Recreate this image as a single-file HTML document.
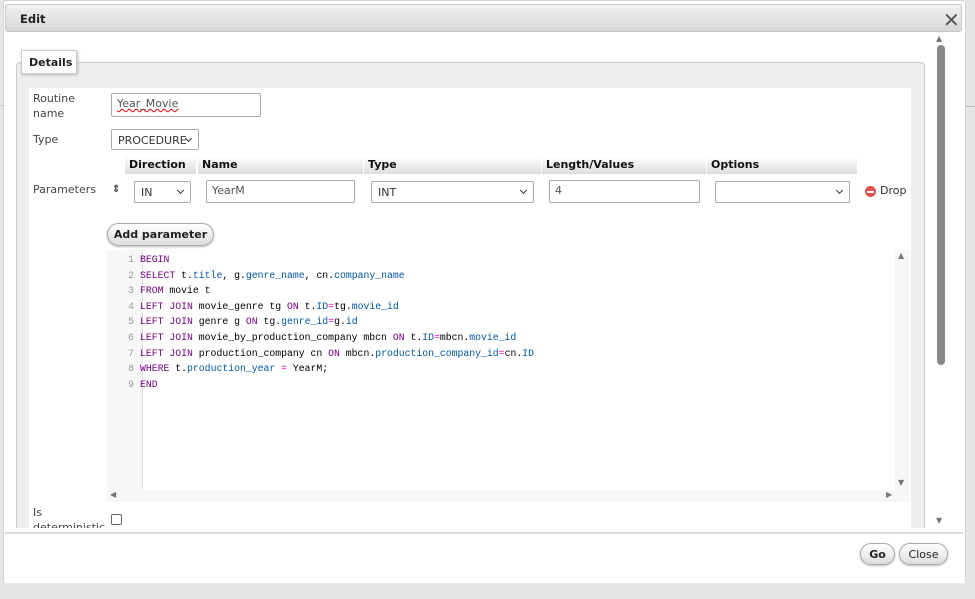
<!DOCTYPE html>
<html><head><style>
*{box-sizing:border-box;margin:0;padding:0}
body{width:975px;height:599px;background:#e6e6e6;position:relative;overflow:hidden;font-family:"DejaVu Sans","Liberation Sans",sans-serif;font-size:11px;color:#333}
.a{position:absolute}
.dlg{left:3px;top:0;width:963px;height:583px;background:#fff;border:1px solid #d4d4d4;border-radius:3px}
.title{left:5px;top:4px;width:957px;height:28px;background:linear-gradient(#f2f2f2,#d8d8d8);border:1px solid #c8c8c8;border-radius:3px;font-weight:bold;color:#222;padding:7px 14px;font-size:11.5px}
.field{left:16px;top:62px;width:909px;height:480px;border:1px solid #ccc;border-radius:4px;background:#eee}
.inner{left:29px;top:88px;width:882px;height:445px;background:#fff}
.legend{left:21px;top:50px;width:56px;height:24px;background:#fff;border:1px solid #ccc;box-shadow:1px 1px 3px #bbb;font-weight:bold;color:#222;padding:5px 7px}
.lbl{color:#444}
.inp{background:#fff;border:1px solid #aaa;border-radius:2px;padding:3px 5px;color:#555}
.sel{background:#fff;border:1px solid #aaa;border-radius:2px;padding:4px 6px;color:#333}
.sel:after{content:"";position:absolute;right:7px;top:6px;width:4px;height:4px;border-right:1.5px solid #333;border-bottom:1.5px solid #333;transform:rotate(45deg)}
.th{top:156px;height:18px;background:linear-gradient(#fff,#ddd);font-weight:bold;color:#111;padding:2px 4px}
.btn{border:1px solid #aaa;border-radius:12px;background:linear-gradient(#fff,#ddd);font-weight:bold;color:#222;text-align:center;box-shadow:0 1px 2px #bbb}
.code{left:107px;top:250px;width:803px;height:252px;background:#f7f7f7}
.gut{left:107px;top:250px;width:36px;height:240px;background:#f7f7f7;border-right:1px solid #ddd}
.edit{left:143px;top:250px;width:752px;height:240px;background:#fff}
pre{position:absolute;left:107px;top:252px;font-family:"Liberation Mono",monospace;font-size:9.8px;line-height:15.6px;color:#000}
.n{color:#999;display:inline-block;width:33px;text-align:right;padding-right:6px}
.k{color:#708}.p{color:#05a}.o{color:#e0c}
</style></head><body>
<div class="a" style="left:0;top:105px;width:3px;height:1px;background:#ccc"></div>
<div class="a" style="left:966px;top:106px;width:9px;height:1px;background:#bbb"></div>
<div class="a dlg"></div>
<div class="a title">Edit</div>
<div class="a" style="left:943px;top:8px;font-size:20px;color:#555;font-weight:300">✕</div>
<div class="a field"></div>
<div class="a inner"></div>
<div class="a legend">Details</div>
<div class="a lbl" style="left:33px;top:91px;line-height:15px">Routine<br>name</div>
<div class="a inp" style="left:111px;top:93px;width:150px;height:24px;text-decoration:underline wavy red;text-decoration-thickness:1px">Year_Movie</div>
<div class="a lbl" style="left:33px;top:133px">Type</div>
<div class="a sel" style="left:111px;top:129px;width:88px;height:21px;padding-right:14px">PROCEDURE</div>
<div class="a th" style="left:125px;width:71px">Direction</div>
<div class="a th" style="left:198px;width:165px">Name</div>
<div class="a th" style="left:364px;width:177px">Type</div>
<div class="a th" style="left:542px;width:164px">Length/Values</div>
<div class="a th" style="left:707px;width:150px">Options</div>
<div class="a lbl" style="left:33px;top:183px">Parameters</div>
<div class="a" style="left:112px;top:184px;font-size:10px;font-weight:bold">⇕</div>
<div class="a sel" style="left:134px;top:181px;width:57px;height:22px">IN</div>
<div class="a inp" style="left:206px;top:180px;width:149px;height:23px">YearM</div>
<div class="a sel" style="left:371px;top:181px;width:163px;height:22px">INT</div>
<div class="a inp" style="left:549px;top:180px;width:151px;height:23px">4</div>
<div class="a sel" style="left:715px;top:181px;width:135px;height:22px"></div>
<div class="a" style="left:865px;top:186px;width:11px;height:11px;border-radius:50%;background:#e05050"><div class="a" style="left:2px;top:4.5px;width:7px;height:2px;background:#fff"></div></div>
<div class="a" style="left:880px;top:184px;color:#333">Drop</div>
<div class="a btn" style="left:107px;top:223px;width:107px;height:23px;padding-top:4px">Add parameter</div>
<div class="a code"></div>
<div class="a gut"></div>
<div class="a edit"></div>
<pre><span class="n">1</span><span class="k">BEGIN</span>
<span class="n">2</span><span class="k">SELECT</span> t.<span class="p">title</span>, g.<span class="p">genre_name</span>, cn.<span class="p">company_name</span>
<span class="n">3</span><span class="k">FROM</span> movie t
<span class="n">4</span><span class="k">LEFT JOIN</span> movie_genre tg <span class="k">ON</span> t.<span class="p">ID</span><span class="o">=</span>tg.<span class="p">movie_id</span>
<span class="n">5</span><span class="k">LEFT JOIN</span> genre g <span class="k">ON</span> tg.<span class="p">genre_id</span><span class="o">=</span>g.<span class="p">id</span>
<span class="n">6</span><span class="k">LEFT JOIN</span> movie_by_production_company mbcn <span class="k">ON</span> t.<span class="p">ID</span><span class="o">=</span>mbcn.<span class="p">movie_id</span>
<span class="n">7</span><span class="k">LEFT JOIN</span> production_company cn <span class="k">ON</span> mbcn.<span class="p">production_company_id</span><span class="o">=</span>cn.<span class="p">ID</span>
<span class="n">8</span><span class="k">WHERE</span> t.<span class="p">production_year</span> <span class="o">=</span> YearM;
<span class="n">9</span><span class="k">END</span></pre>
<div class="a" style="left:898px;top:251px;font-size:8px;color:#777">▲</div>
<div class="a" style="left:898px;top:478px;font-size:8px;color:#777">▼</div>
<div class="a" style="left:110px;top:490px;font-size:8px;color:#777">◀</div>
<div class="a" style="left:886px;top:490px;font-size:8px;color:#777">▶</div>
<div class="a lbl" style="left:33px;top:505px;line-height:15px;height:24px;overflow:hidden">Is<br>deterministic</div>
<div class="a" style="left:111px;top:514px;width:11px;height:11px;border:1px solid #666;border-radius:2px;background:#fff"></div>
<div class="a" style="left:5px;top:528px;width:960px;height:55px;background:#fff"></div>
<div class="a" style="left:5px;top:532px;width:958px;height:2px;background:#ddd"></div>
<div class="a" style="left:936px;top:34px;font-size:8px;color:#777">▲</div>
<div class="a" style="left:937px;top:45px;width:8px;height:320px;border-radius:4px;background:#888"></div>
<div class="a" style="left:936px;top:516px;font-size:8px;color:#777">▼</div>
<div class="a btn" style="left:860px;top:543px;width:35px;height:22px;padding-top:4px">Go</div>
<div class="a btn" style="left:899px;top:543px;width:49px;height:22px;padding-top:4px;font-weight:normal">Close</div>
</body></html>
